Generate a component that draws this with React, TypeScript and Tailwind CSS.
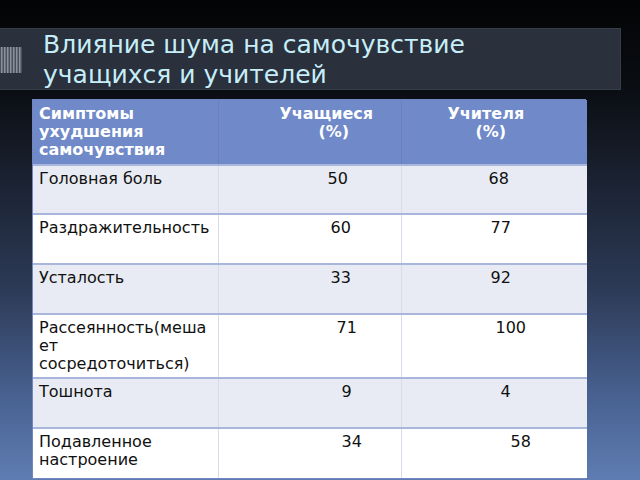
const rows = [
  { name: ['Головная боль'], a: '50', ap: 'pl-[109px]', b: '68', bp: 'pl-[87px]', h: 'h-[49px]', bg: 'bg-[#e8ebf3]' },
  { name: ['Раздражительность'], a: '60', ap: 'pl-[112px]', b: '77', bp: 'pl-[89px]', h: 'h-[50px]', bg: 'bg-white' },
  { name: ['Усталость'], a: '33', ap: 'pl-[112px]', b: '92', bp: 'pl-[89px]', h: 'h-[50px]', bg: 'bg-[#e8ebf3]' },
  { name: ['Рассеянность(меша', 'ет', 'сосредоточиться)'], a: '71', ap: 'pl-[118px]', b: '100', bp: 'pl-[94px]', h: 'h-[64px]', bg: 'bg-white' },
  { name: ['Тошнота'], a: '9', ap: 'pl-[123px]', b: '4', bp: 'pl-[99px]', h: 'h-[50px]', bg: 'bg-[#e8ebf3]' },
  { name: ['Подавленное', 'настроение'], a: '34', ap: 'pl-[123px]', b: '58', bp: 'pl-[109px]', h: 'h-[50px]', bg: 'bg-white' },
]

function Stripes() {
  return (
    <svg width="22" height="26" viewBox="0 0 22 26" className="block">
      <rect width="22" height="26" fill="#4a505c" />
      {[1, 4, 7, 10, 13, 16, 19].map((x) => (
        <rect key={x} x={x} y="0" width="1.5" height="26" fill="#8a909c" />
      ))}
    </svg>
  )
}

export default function App() {
  return (
    <div className="w-[640px] h-[480px] overflow-hidden bg-[linear-gradient(to_bottom,#030405_0%,#0a0d12_18%,#161c28_32%,#2c3a56_60%,#47608f_82%,#5f7db2_100%)] font-['DejaVu_Sans',sans-serif] pt-[28px]">
      <div className="w-[621px] h-[62px] bg-[#2a303c] border-y border-r border-[#363d4a] flex">
        <div className="w-[43px] shrink-0 pt-[18px]">
          <Stripes />
        </div>
        <h1 className="text-[25px] leading-[30px] text-[#c6eef8] pt-[1px] m-0 font-normal">
          Влияние шума на самочувствие
          <br />
          учащихся и учителей
        </h1>
      </div>
      <div className="ml-[32px] mt-[9px] w-[554px] border border-[#6f86c0]">
        <table className="w-full border-collapse table-fixed text-[16px] leading-[18px]">
          <colgroup>
            <col className="w-[185px]" />
            <col className="w-[183px]" />
            <col className="w-[186px]" />
          </colgroup>
          <thead>
            <tr className="h-[65px] bg-[#7089c8] text-white font-bold align-top">
              <th className="text-left font-bold pl-[6px] pt-[5px] border-r border-[#6a80bc]">
                Симптомы
                <br />
                ухудшения
                <br />
                самочувствия
              </th>
              <th className="text-left font-bold pt-[5px] border-r border-[#6a80bc]">
                <div className="pl-[61px]">Учащиеся</div>
                <div className="pl-[100px]">(%)</div>
              </th>
              <th className="text-left font-bold pt-[5px]">
                <div className="pl-[46px]">Учителя</div>
                <div className="pl-[74px]">(%)</div>
              </th>
            </tr>
          </thead>
          <tbody className="text-[#111]">
            {rows.map((r, i) => (
              <tr key={i} className={`${r.h} ${r.bg} align-top border-t-2 border-[#a7b6da]`}>
                <td className="pl-[6px] pt-[4px] border-r border-[#d6dcea]">
                  {r.name.map((n) => (
                    <div key={n}>{n}</div>
                  ))}
                </td>
                <td className={`${r.ap} pt-[4px] border-r border-[#d6dcea]`}>{r.a}</td>
                <td className={`${r.bp} pt-[4px]`}>{r.b}</td>
              </tr>
            ))}
          </tbody>
        </table>
      </div>
    </div>
  )
}
